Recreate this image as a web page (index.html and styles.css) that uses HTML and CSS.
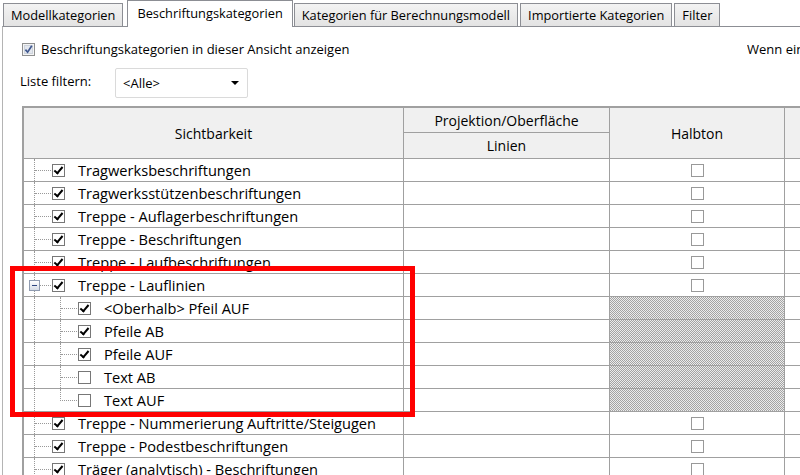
FILE: index.html
```html
<!DOCTYPE html>
<html lang="de">
<head>
  <meta charset="UTF-8" />
  <meta name="viewport" content="width=device-width, initial-scale=1.0" />
  <title>Sichtbarkeit/Grafiken</title>
  <link rel="stylesheet" href="styles.css">
</head>
<body>

<div class="window">
  <div class="tabs">
    <div class="tab">Modellkategorien</div>
    <div class="tab active">Beschriftungskategorien</div>
    <div class="tab">Kategorien für Berechnungsmodell</div>
    <div class="tab">Importierte Kategorien</div>
    <div class="tab">Filter</div>
  </div>

  <div class="panel">
    <div class="options">
      <label class="show">
        <svg class="win-check" width="13" height="13" viewBox="0 0 13 13">
          <rect x="0.5" y="0.5" width="12" height="12" fill="#f4f4f4" stroke="#8e8f8f"/>
          <rect x="2.5" y="2.5" width="8" height="8" fill="#e3e7ee" stroke="#cdd3dc"/>
          <path d="M3.4 6.6 L5.6 9.2 L9.8 2.8" fill="none" stroke="#40588f" stroke-width="1.7"/>
        </svg>
        Beschriftungskategorien in dieser Ansicht anzeigen
      </label>
      <span class="note">Wenn eine Kategorie nicht aktiviert ist, ist sie nicht sichtbar.</span>
    </div>

    <div class="filter">
      <span class="filter-label">Liste filtern:</span>
      <div class="select"><span>&lt;Alle&gt;</span><span class="arrow"></span></div>
    </div>

    <div class="grid-wrap">
      <table class="grid">
        <thead>
          <tr>
            <th class="c1" rowspan="2">Sichtbarkeit</th>
            <th class="c2"><div class="hcell top">Projektion/Oberfläche</div></th>
            <th class="c3" rowspan="2">Halbton</th>
            <th class="c4" rowspan="2"></th>
          </tr>
          <tr>
            <th><div class="hcell sub">Linien</div></th>
          </tr>
        </thead>
        <tbody>
          <tr>
            <td><div class="node"><span class="tee"><span class="hline"></span></span><span class="box on"></span><span class="label">Tragwerksbeschriftungen</span></div></td>
            <td></td>
            <td class="half"><div class="node"><span class="box"></span></div></td>
            <td></td>
          </tr>
          <tr>
            <td><div class="node"><span class="tee"><span class="hline"></span></span><span class="box on"></span><span class="label">Tragwerksstützenbeschriftungen</span></div></td>
            <td></td>
            <td class="half"><div class="node"><span class="box"></span></div></td>
            <td></td>
          </tr>
          <tr>
            <td><div class="node"><span class="tee"><span class="hline"></span></span><span class="box on"></span><span class="label">Treppe - Auflagerbeschriftungen</span></div></td>
            <td></td>
            <td class="half"><div class="node"><span class="box"></span></div></td>
            <td></td>
          </tr>
          <tr>
            <td><div class="node"><span class="tee"><span class="hline"></span></span><span class="box on"></span><span class="label">Treppe - Beschriftungen</span></div></td>
            <td></td>
            <td class="half"><div class="node"><span class="box"></span></div></td>
            <td></td>
          </tr>
          <tr>
            <td><div class="node"><span class="tee"><span class="hline"></span></span><span class="box on"></span><span class="label">Treppe - Laufbeschriftungen</span></div></td>
            <td></td>
            <td class="half"><div class="node"><span class="box"></span></div></td>
            <td></td>
          </tr>
          <!-- expanded group -->
          <tr>
            <td><div class="node">
              <span class="fork">
                <span class="stem"><span class="stem-line"></span><span class="toggle"></span><span class="stem-line"></span></span>
                <span class="hline"></span>
              </span>
              <span class="box on"></span><span class="label">Treppe - Lauflinien</span>
            </div></td>
            <td></td>
            <td class="half"><div class="node"><span class="box"></span></div></td>
            <td></td>
          </tr>
          <tr>
            <td><div class="node"><span class="pipe"></span><span class="tee"><span class="hline"></span></span><span class="box on"></span><span class="label">&lt;Oberhalb&gt; Pfeil AUF</span></div></td>
            <td></td>
            <td class="half na"></td>
            <td></td>
          </tr>
          <tr>
            <td><div class="node"><span class="pipe"></span><span class="tee"><span class="hline"></span></span><span class="box on"></span><span class="label">Pfeile AB</span></div></td>
            <td></td>
            <td class="half na"></td>
            <td></td>
          </tr>
          <tr>
            <td><div class="node"><span class="pipe"></span><span class="tee"><span class="hline"></span></span><span class="box on"></span><span class="label">Pfeile AUF</span></div></td>
            <td></td>
            <td class="half na"></td>
            <td></td>
          </tr>
          <tr>
            <td><div class="node"><span class="pipe"></span><span class="tee"><span class="hline"></span></span><span class="box"></span><span class="label">Text AB</span></div></td>
            <td></td>
            <td class="half na"></td>
            <td></td>
          </tr>
          <tr>
            <td><div class="node"><span class="pipe"></span><span class="ell"><span class="corner"></span></span><span class="box"></span><span class="label">Text AUF</span></div></td>
            <td></td>
            <td class="half na"></td>
            <td></td>
          </tr>
          <tr>
            <td><div class="node"><span class="tee"><span class="hline"></span></span><span class="box on"></span><span class="label">Treppe - Nummerierung Auftritte/Steigugen</span></div></td>
            <td></td>
            <td class="half"><div class="node"><span class="box"></span></div></td>
            <td></td>
          </tr>
          <tr>
            <td><div class="node"><span class="tee"><span class="hline"></span></span><span class="box on"></span><span class="label">Treppe - Podestbeschriftungen</span></div></td>
            <td></td>
            <td class="half"><div class="node"><span class="box"></span></div></td>
            <td></td>
          </tr>
          <tr>
            <td><div class="node"><span class="tee"><span class="hline"></span></span><span class="box on"></span><span class="label">Träger (analytisch) - Beschriftungen</span></div></td>
            <td></td>
            <td class="half"><div class="node"><span class="box"></span></div></td>
            <td></td>
          </tr>
        </tbody>
      </table>
    </div>
  </div>

  <!-- markup frame around the group -->
  <div class="mark"></div>
</div>

</body>
</html>
```

FILE: styles.css
```css
/* General */
body {
  margin: 0;
  font-family: "Open Sans", "Noto Sans", sans-serif;
  font-size: 13px;
  color: #000;
  background: #fff;
  overflow: hidden;
}

.window {
  position: relative;
  width: 800px;
  height: 475px;
  overflow: hidden;
}

/* Tab strip */
.tabs {
  display: flex;
  align-items: flex-end;
  height: 26px;
  padding-left: 3px;
  font-size: 12.8px;
}

.tab {
  height: 22px;
  line-height: 22px;
  padding: 0 7px;
  margin-right: 2px;
  border: 1px solid #8c8e94;
  border-bottom: none;
  background: linear-gradient(#f3f3f3, #e3e3e3);
  white-space: nowrap;
}

.tab.active {
  position: relative;
  z-index: 1;
  height: 26px;
  line-height: 24px;
  padding: 0 9px;
  margin: 0 1px -1px 2px;
  background: #fff;
}

/* Panel */
.panel {
  height: 448px;
  margin-left: 2px;
  border-top: 1px solid #8c8e94;
  border-left: 1px solid #b4b4b4;
}

.options {
  display: grid;
  grid-template-columns: 725px 1fr;
  align-items: center;
  height: 14px;
  margin-top: 13px;
  padding-left: 19px;
}

.show {
  display: flex;
  align-items: center;
  gap: 6px;
}

.note {
  white-space: nowrap;
  overflow: hidden;
}

.filter {
  display: flex;
  margin-top: 14px;
  padding-left: 17px;
}

.filter-label {
  width: 95px;
  margin-top: 4px;
}

.select {
  width: 133px;
  height: 30px;
  box-sizing: border-box;
  display: flex;
  align-items: center;
  justify-content: space-between;
  padding: 0 8px 0 7px;
  border: 1px solid #dadada;
  border-radius: 2px;
  font-size: 13px;
}

.arrow {
  width: 0;
  height: 0;
  border-left: 4px solid transparent;
  border-right: 4px solid transparent;
  border-top: 4px solid #000;
}

/* Grid */
.grid-wrap {
  margin: 8px 0 0 19px;
}

.grid {
  table-layout: fixed;
  width: 883px;
  border-collapse: separate;
  border-spacing: 0;
  border-top: 2px solid #a0a0a0;
  border-left: 2px solid #a0a0a0;
  font-size: 14.6px;
}

.grid th,
.grid td {
  padding: 0;
  border-right: 1px solid #a0a0a0;
  border-bottom: 1px solid #a0a0a0;
}

.grid th {
  background: #f0f0f0;
  font-weight: normal;
  font-size: 14px;
}

.c1, .c2, .c3, .c4 {
  box-sizing: border-box;
}
.c1 { width: 380px; }
.c2 { width: 206px; }
.c3 { width: 175px; }
.c4 { width: 120px; }

.hcell {
  display: flex;
  align-items: center;
  justify-content: center;
}
.hcell.top { height: 24px; }
.hcell.sub { height: 25px; }

/* Tree rows */
.node {
  height: 22px;
  display: flex;
  align-items: center;
  white-space: nowrap;
}

.tee {
  align-self: stretch;
  display: flex;
  align-items: center;
  margin-left: 10px;
  border-left: 1px dotted #999;
}

.hline {
  width: 16px;
  height: 0;
  border-top: 1px dotted #999;
}

.pipe {
  align-self: stretch;
  width: 25px;
  margin-left: 10px;
  border-left: 1px dotted #999;
}

.pipe + .tee {
  margin-left: 0;
}

.ell {
  align-self: stretch;
  display: flex;
  align-items: flex-start;
}

.corner {
  width: 16px;
  height: 11px;
  border-left: 1px dotted #999;
  border-bottom: 1px dotted #999;
}

.fork {
  align-self: stretch;
  display: flex;
  align-items: center;
  margin-left: 5px;
}

.stem {
  align-self: stretch;
  width: 11px;
  display: flex;
  flex-direction: column;
}

.stem-line {
  flex: 1;
  margin-left: 5px;
  border-left: 1px dotted #999;
}

.toggle {
  width: 11px;
  height: 11px;
  box-sizing: border-box;
  display: flex;
  align-items: center;
  justify-content: center;
  border: 1px solid #8f9bb0;
  background: linear-gradient(#fff, #d6dce6);
}

.toggle::before {
  content: "";
  width: 5px;
  height: 1px;
  background: #2f4680;
}

.fork .hline {
  width: 11px;
}

.box {
  flex-shrink: 0;
  width: 13px;
  height: 13px;
  box-sizing: border-box;
  margin-left: 1px;
  display: flex;
  align-items: center;
  justify-content: center;
  border: 1px solid #777;
  background: #fff;
}

.box.on::after {
  content: "";
  width: 3px;
  height: 7px;
  margin-top: -2px;
  border: solid #000;
  border-width: 0 2px 2px 0;
  transform: rotate(40deg);
}

.label {
  margin-left: 13px;
}

.half .node {
  justify-content: center;
}

.half .box {
  margin-left: 0;
  border-color: #999;
}

/* not applicable: dithered grey */
.na {
  background-color: #c8c8c8;
  background-image: conic-gradient(#a4a4a4 25%, #ececec 0 50%, #a4a4a4 0 75%, #ececec 0);
  background-size: 2px 2px;
}

/* Red frame */
.mark {
  position: absolute;
  left: 10px;
  top: 266px;
  width: 405px;
  height: 151px;
  box-sizing: border-box;
  border: 5px solid #f00;
}
```
